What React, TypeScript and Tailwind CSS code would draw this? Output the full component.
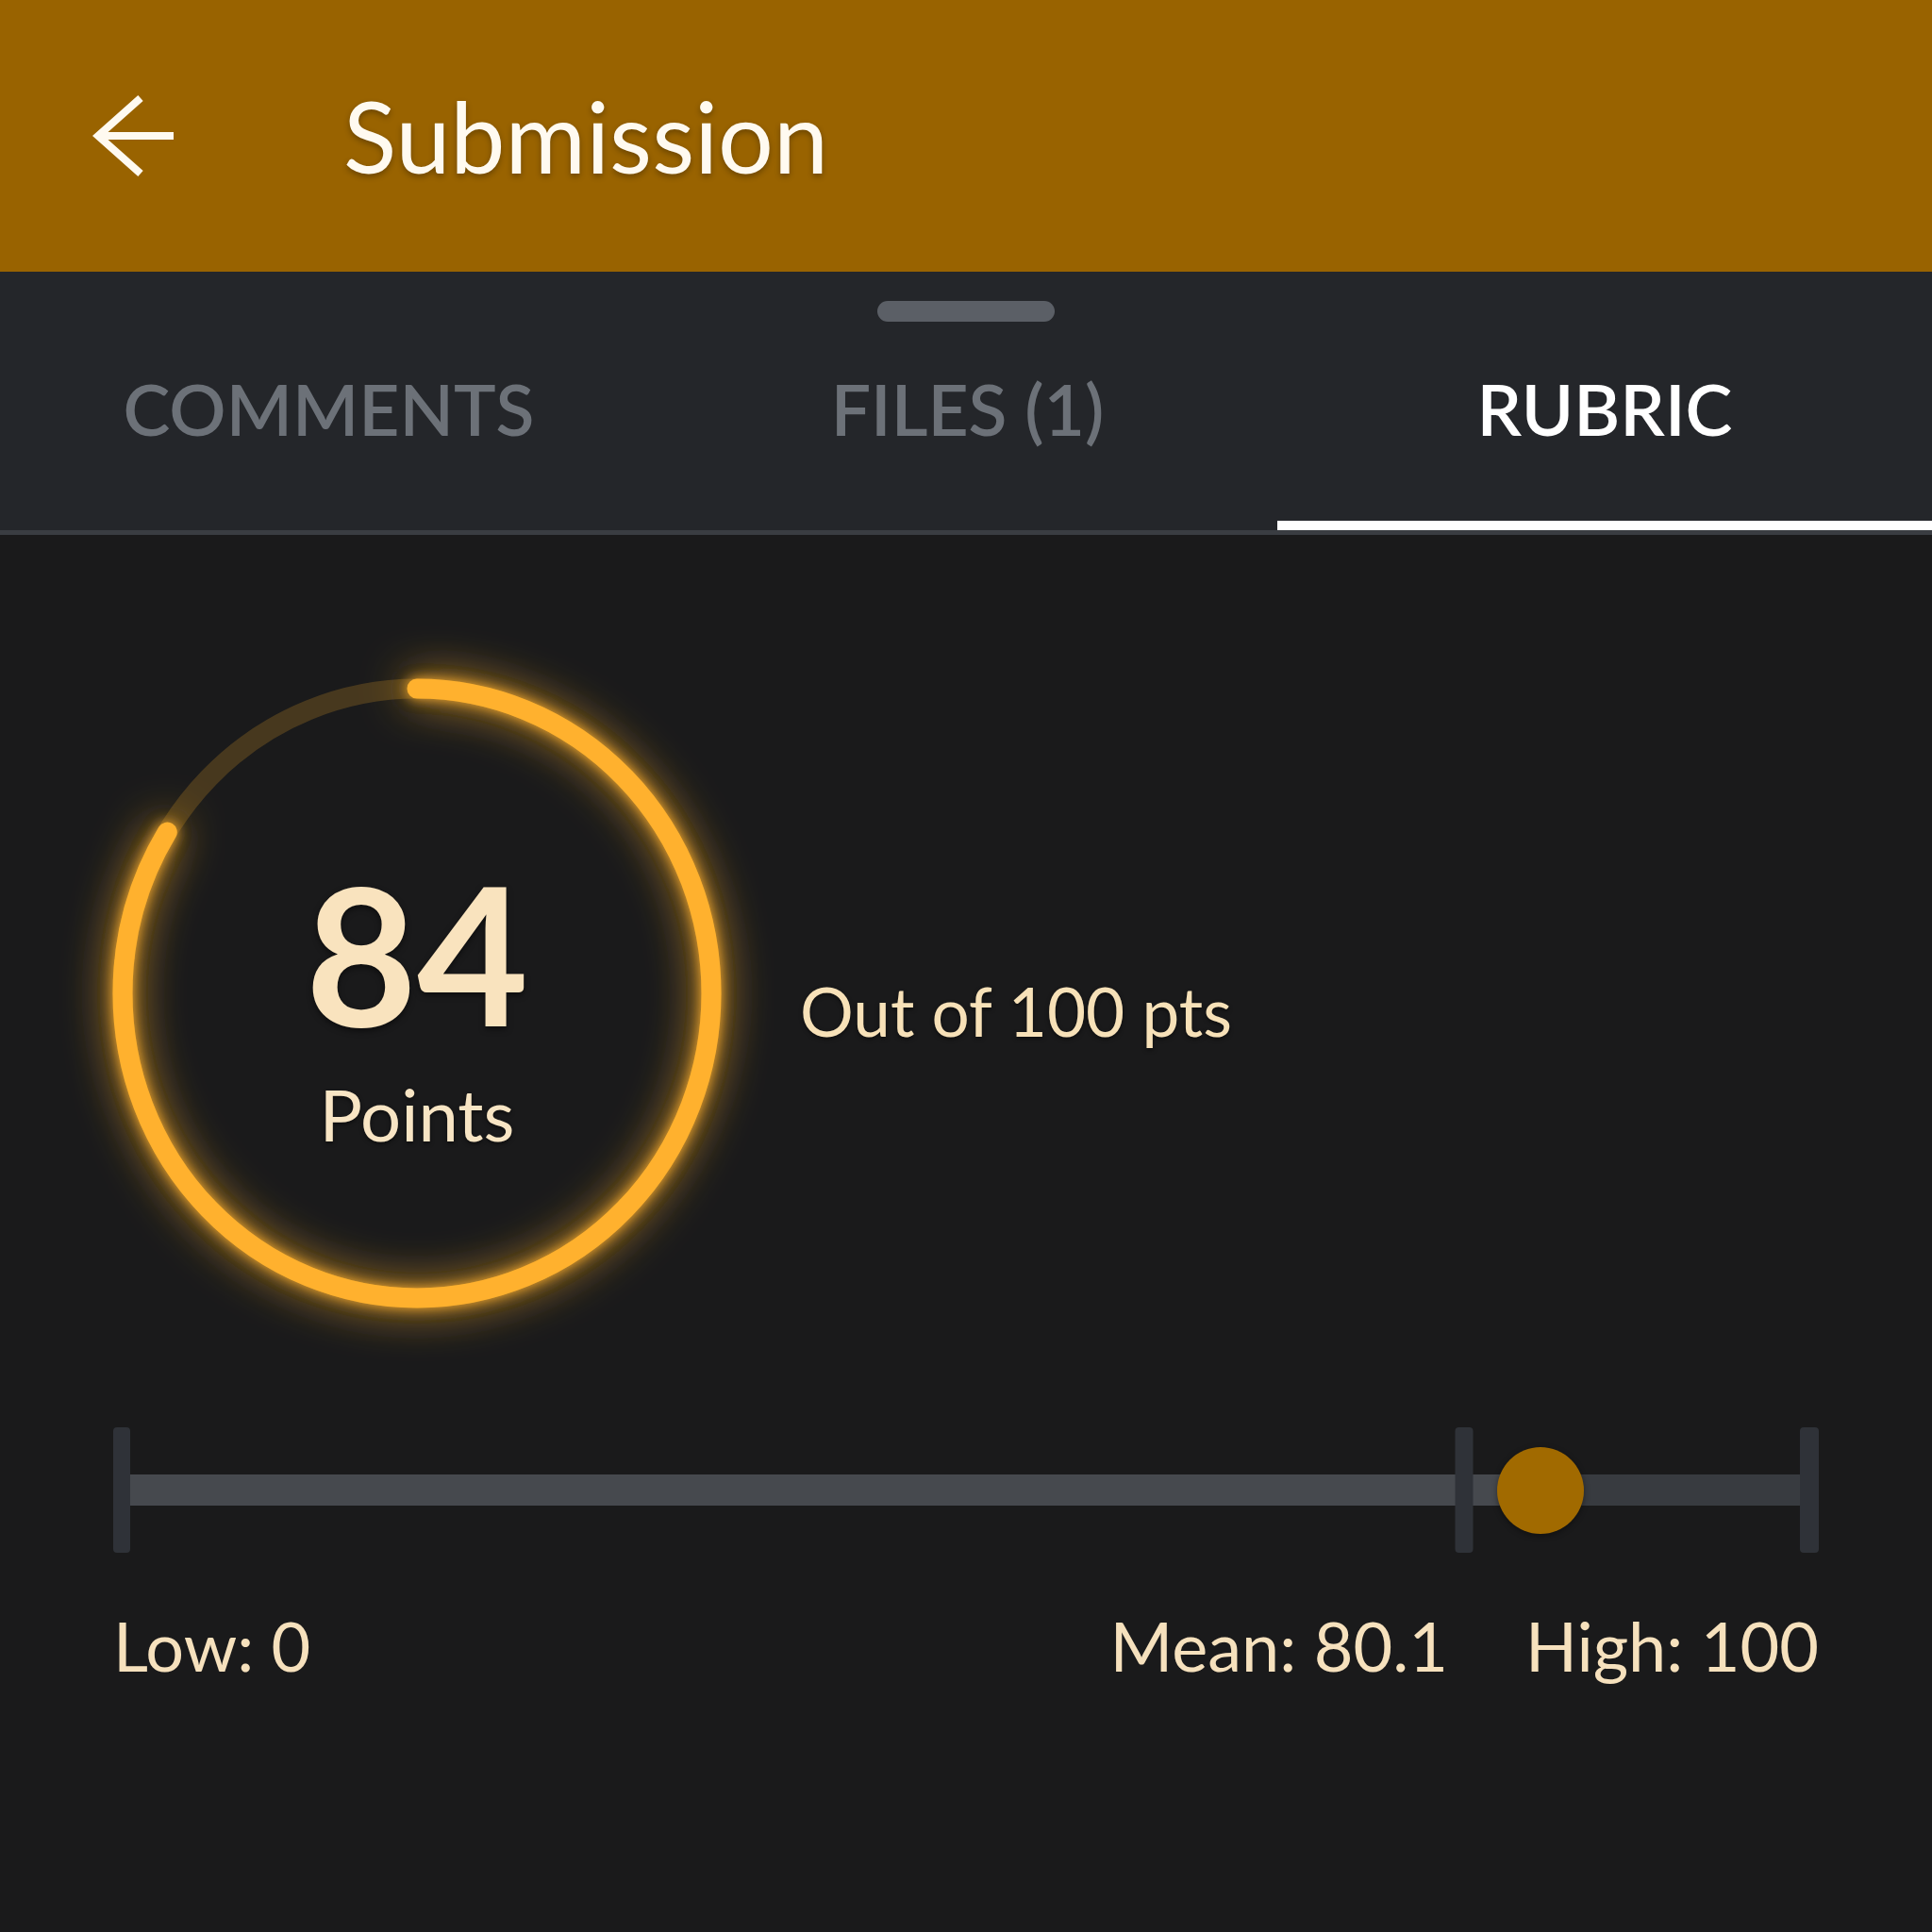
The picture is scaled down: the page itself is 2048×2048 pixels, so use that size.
import React from "react";

const score = 84;
const total = 100;
const mean = 80.1;

const CX = 322;
const CY = 334;
const RX = 312;
const RY = 323;
const ringPath = `M ${CX} ${CY - RY} A ${RX} ${RY} 0 1 1 ${CX} ${CY + RY} A ${RX} ${RY} 0 1 1 ${CX} ${CY - RY}`;

function BackArrow() {
  return (
    <svg width="88" height="88" viewBox="0 0 88 88" fill="none" className="shrink-0">
      <path d="M5 44 H86" stroke="#fffaf0" strokeWidth="8" />
      <path d="M51 4 L6 44 L51 84" stroke="#fffaf0" strokeWidth="8" strokeLinejoin="miter" />
    </svg>
  );
}

function Ring() {
  const pct = (score / total) * 100;
  return (
    <div className="relative w-[644px] h-[668px] shrink-0">
      <svg
        width="644"
        height="668"
        viewBox="0 0 644 668"
        className="absolute inset-0 overflow-visible"
      >
        <defs>
          <filter id="glow" x="-40%" y="-40%" width="180%" height="180%">
            <feGaussianBlur stdDeviation="7" result="b1" />
            <feGaussianBlur in="SourceGraphic" stdDeviation="24" result="b2" />
            <feMerge>
              <feMergeNode in="b2" />
              <feMergeNode in="b1" />
              <feMergeNode in="SourceGraphic" />
            </feMerge>
          </filter>
        </defs>
        <path d={ringPath} fill="none" stroke="#ffb22e" strokeOpacity="0.2" strokeWidth="21" />
        <path
          d={ringPath}
          pathLength={100}
          fill="none"
          stroke="#ffb12f"
          strokeWidth="21"
          strokeLinecap="round"
          strokeDasharray={`${pct} ${100}`}
          filter="url(#glow)"
        />
      </svg>
      <div className="relative flex h-full flex-col items-center justify-center pt-[20px]">
        <div className="text-[204px] leading-none font-bold text-[#f9e3be] [text-shadow:0_3px_6px_rgba(0,0,0,0.5)]">
          84
        </div>
        <div className="mt-[32px] text-[76px] leading-none text-[#f8e5c4] [text-shadow:0_2px_4px_rgba(0,0,0,0.5)]">
          Points
        </div>
      </div>
    </div>
  );
}

function Slider() {
  return (
    <div className="flex h-[133px] items-center">
      <div className="h-full w-[18px] rounded-[4px] bg-[#2f3238]" />
      <div className="relative h-[33px] flex-1 bg-[#383b40]">
        <div className="absolute inset-y-0 left-0 bg-[#46494e]" style={{ width: `${score}%` }} />
        <div
          className="absolute top-[-50px] h-[133px] w-[19px] -translate-x-1/2 rounded-[4px] bg-[#2f3238]"
          style={{ left: `${mean - 0.2}%` }}
        />
        <div
          className="absolute top-1/2 h-[92px] w-[92px] -translate-x-1/2 -translate-y-1/2 rounded-full bg-[#a16a00] shadow-[0_2px_6px_rgba(0,0,0,0.4)]"
          style={{ left: `calc(${score}% + 8px)` }}
        />
      </div>
      <div className="h-full w-[20px] rounded-[4px] bg-[#2f3238]" />
    </div>
  );
}

export default function App() {
  return (
    <div className="w-[2048px] h-[2048px] bg-[#1a1a1b] font-['Lato','Noto_Sans',sans-serif] flex flex-col">
      <header className="h-[288px] bg-[#996300] flex items-center pl-[98px]">
        <BackArrow />
        <h1 className="ml-[178px] text-[104px] leading-none font-normal text-[#fffaf0] [text-shadow:0_3px_6px_rgba(0,0,0,0.3)]">
          Submission
        </h1>
      </header>

      <nav className="bg-[#24262a] border-b-[5px] border-[#3a3d42]">
        <div className="flex justify-center pt-[31px]">
          <div className="h-[22px] w-[188px] rounded-full bg-[#5b5f66]" />
        </div>
        <div className="grid grid-cols-[677px_677px_694px]">
          <div className="relative h-[211px] flex justify-center">
            <span className="mt-[55px] ml-[20px] text-[75px] leading-none font-semibold text-[#6c7178]">
              COMMENTS
            </span>
          </div>
          <div className="relative h-[211px] flex justify-center">
            <span className="mt-[55px] ml-[20px] text-[75px] leading-none font-semibold text-[#6c7178]">
              FILES (1)
            </span>
          </div>
          <div className="relative h-[211px] flex justify-center">
            <span className="mt-[55px] text-[75px] leading-none font-semibold text-white">
              RUBRIC
            </span>
            <div className="absolute bottom-[-10px] left-0 right-0 h-[10px] bg-white" />
          </div>
        </div>
        <div className="h-[10px]" />
      </nav>

      <main className="flex flex-col px-[120px] pt-[152px]">
        <div className="flex items-center">
          <Ring />
          <div className="ml-[84px] pt-[36px] text-[71px] leading-none text-[#f7e1b8] [text-shadow:0_2px_4px_rgba(0,0,0,0.5)]">
            Out of 100 pts
          </div>
        </div>

        <div className="mt-[126px]">
          <Slider />
        </div>

        <div className="mt-[62px] flex items-start text-[72px] leading-none text-[#f6e1bd]">
          <span>Low: 0</span>
          <span className="ml-auto">Mean: 80.1</span>
          <span className="ml-[82px]">High: 100</span>
        </div>
      </main>
    </div>
  );
}
